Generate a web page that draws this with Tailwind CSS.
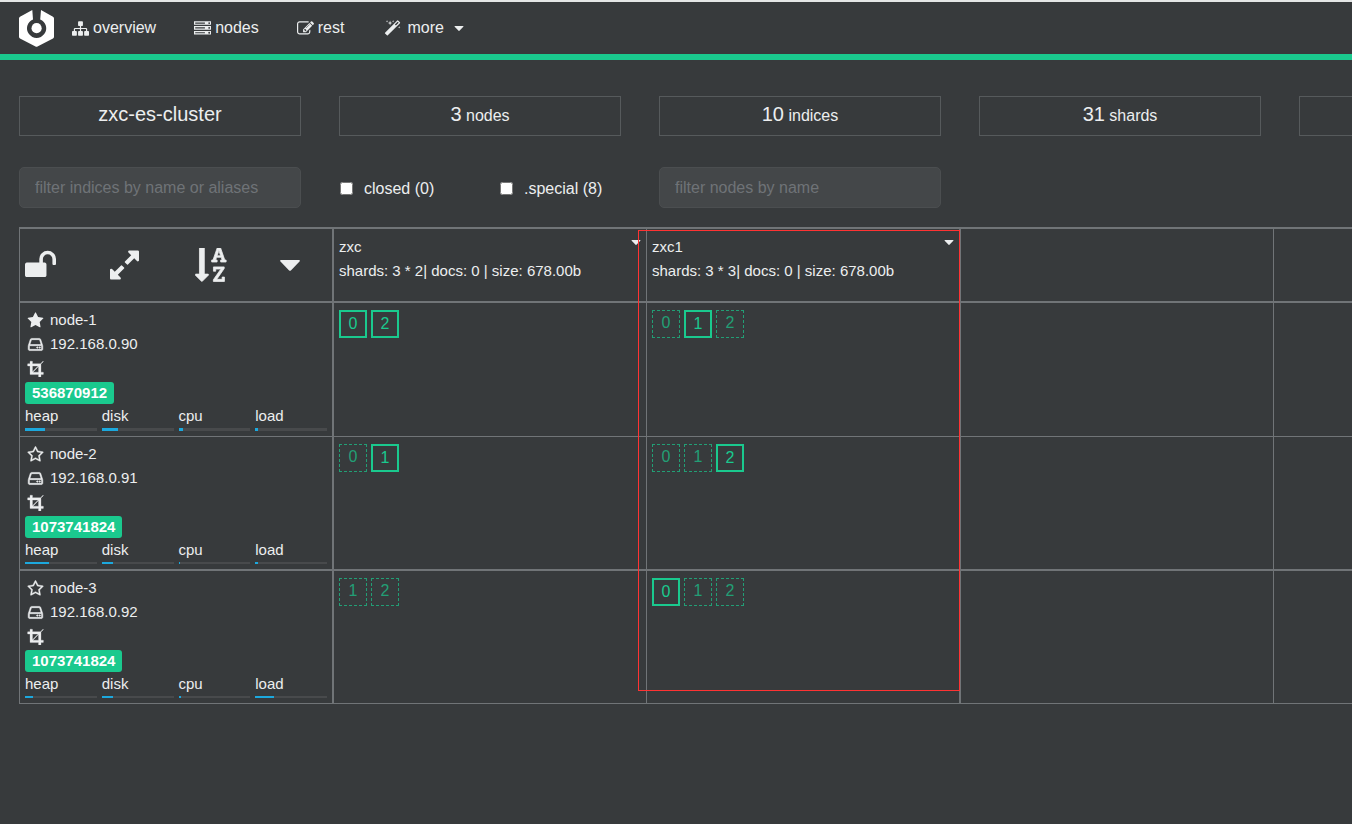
<!DOCTYPE html>
<html lang="en">
<head>
    <meta charset="UTF-8">
    <meta name="viewport" content="width=device-width, initial-scale=1.0">
    <title>zxc-es-cluster</title>
    <script src="https://cdn.jsdelivr.net/npm/@tailwindcss/browser@4"></script>
</head>
<body class="min-h-screen overflow-x-hidden bg-[#373a3c] font-['Liberation_Sans',Arial,sans-serif] text-base text-[#eceeef]">

    <!-- Icon definitions -->
    <svg class="hidden" aria-hidden="true">
        <symbol id="i-sitemap" viewBox="0 0 1792 1792"><path d="M1792 1248v320q0 40-28 68t-68 28h-320q-40 0-68-28t-28-68v-320q0-40 28-68t68-28h96v-192h-512v192h96q40 0 68 28t28 68v320q0 40-28 68t-68 28h-320q-40 0-68-28t-28-68v-320q0-40 28-68t68-28h96v-192h-512v192h96q40 0 68 28t28 68v320q0 40-28 68t-68 28h-320q-40 0-68-28t-28-68v-320q0-40 28-68t68-28h96v-192q0-52 38-90t90-38h512v-192h-96q-40 0-68-28t-28-68v-320q0-40 28-68t68-28h320q40 0 68 28t28 68v320q0 40-28 68t-68 28h-96v192h512q52 0 90 38t38 90v192h96q40 0 68 28t28 68z"/></symbol>
        <symbol id="i-server" viewBox="0 0 1792 1792"><path d="M128 1408h1024v-128h-1024v128zm0-512h1024v-128h-1024v128zm1568 448q0-40-28-68t-68-28-68 28-28 68 28 68 68 28 68-28 28-68zm-1568-960h1024v-128h-1024v128zm1568 448q0-40-28-68t-68-28-68 28-28 68 28 68 68 28 68-28 28-68zm0-512q0-40-28-68t-68-28-68 28-28 68 28 68 68 28 68-28 28-68zm96 832v384h-1792v-384h1792zm0-512v384h-1792v-384h1792zm0-512v384h-1792v-384h1792z"/></symbol>
        <symbol id="i-edit" viewBox="0 0 1792 1792"><path d="M888 1184l116-116-152-152-116 116v56h96v96h56zm440-720q-16-16-33 1l-350 350q-17 17-1 33t33-1l350-350q17-17 1-33zm80 594v190q0 119-84.5 203.5t-203.5 84.5h-832q-119 0-203.5-84.5t-84.5-203.5v-832q0-119 84.5-203.5t203.5-84.5h832q63 0 117 25 15 7 18 23 3 17-9 29l-49 49q-14 14-32 8-23-6-45-6h-832q-66 0-113 47t-47 113v832q0 66 47 113t113 47h832q66 0 113-47t47-113v-126q0-13 9-22l64-64q15-15 35-7t20 29zm-96-738l288 288-672 672h-288v-288zm444 132l-92 92-288-288 92-92q28-28 68-28t68 28l152 152q28 28 28 68t-28 68z"/></symbol>
        <symbol id="i-magic" viewBox="0 0 1792 1792"><path d="M1254 581l293-293-107-107-293 293zm447-293q0 27-18 45l-1286 1286q-18 18-45 18t-45-18l-198-198q-18-18-18-45t18-45l1286-1286q18-18 45-18t45 18l198 198q18 18 18 45zm-1351-190l98 30-98 30-30 98-30-98-98-30 98-30 30-98zm350 162l196 60-196 60-60 196-60-196-196-60 196-60 60-196zm930 478l98 30-98 30-30 98-30-98-98-30 98-30 30-98zm-640-640l98 30-98 30-30 98-30-98-98-30 98-30 30-98z"/></symbol>
        <symbol id="i-unlock" viewBox="64 0 1664 1792"><path d="M1728 576v256q0 26-19 45t-45 19h-64q-26 0-45-19t-19-45v-256q0-106-75-181t-181-75-181 75-75 181v192h96q40 0 68 28t28 68v576q0 40-28 68t-68 28h-960q-40 0-68-28t-28-68v-576q0-40 28-68t68-28h672v-192q0-185 131.5-316.5t316.5-131.5 316.5 131.5 131.5 316.5z"/></symbol>
        <symbol id="i-expand" viewBox="128 0 1536 1792"><path d="M883 1056q0 13-10 23l-332 332 144 144q19 19 19 45t-19 45-45 19h-448q-26 0-45-19t-19-45v-448q0-26 19-45t45-19 45 19l144 144 332-332q10-10 23-10t23 10l114 114q10 10 10 23zm781-864v448q0 26-19 45t-45 19-45-19l-144-144-332 332q-10 10-23 10t-23-10l-114-114q-10-10-10-23t10-23l332-332-144-144q-19-19-19-45t19-45 45-19h448q26 0 45 19t19 45z"/></symbol>
        <symbol id="i-sort" viewBox="32 0 1664 1792"><path stroke="currentColor" stroke-width="40" d="M1191 408h177l-72-218-12-47q-2-16-2-20h-4l-3 20q0 1-3.5 18t-7.5 29zm-455 1000q0 12-10 24l-319 319q-10 9-23 9-12 0-23-9l-320-320q-15-16-7-35 8-20 30-20h192v-1376q0-14 9-23t23-9h192q14 0 23 9t9 23v1376h192q14 0 23 9t9 23zm836 123v233h-584v-90l369-529q12-18 21-27l11-9v-3q-2 0-6.500.5t-7.500.5q-12 3-30 3h-232v115h-120v-229h567v89l-369 530q-6 8-21 26l-11 11v2l14-2q9-2 30-2h248v-119h121zm89-898v106h-288v-106h75l-47-144h-243l-47 144h75v106h-287v-106h70l230-662h162l230 662h70z"/></symbol>
        <symbol id="i-star" viewBox="0 0 1792 1792"><path d="M1728 647q0 22-26 48l-363 354 86 500q1 7 1 20 0 21-10.5 35.5t-30.5 14.5q-19 0-40-12l-449-236-449 236q-22 12-40 12-21 0-31.5-14.5t-10.5-35.5q0-6 2-20l86-500-364-354q-25-27-25-48 0-37 56-46l502-73 225-455q19-41 49-41t49 41l225 455 502 73q56 9 56 46z"/></symbol>
        <symbol id="i-star-o" viewBox="0 0 1792 1792"><path stroke="currentColor" stroke-width="40" d="M1201 1004l306-297-422-62-189-382-189 382-422 62 306 297-73 421 378-199 377 199zm527-357q0 22-26 48l-363 354 86 500q1 7 1 20 0 50-41 50-19 0-40-12l-449-236-449 236q-22 12-40 12-21 0-31.5-14.5t-10.5-35.5q0-6 2-20l86-500-364-354q-25-27-25-48 0-37 56-46l502-73 225-455q19-41 49-41t49 41l225 455 502 73q56 9 56 46z"/></symbol>
        <symbol id="i-hdd" viewBox="0 0 1792 1792"><path stroke="currentColor" stroke-width="60" d="M1168 1216q0 33-23.5 56.500t-56.500 23.500-56.500-23.500-23.500-56.500 23.500-56.500 56.500-23.500 56.500 23.500 23.500 56.500zm256 0q0 33-23.500 56.500t-56.500 23.500-56.500-23.500-23.500-56.500 23.500-56.500 56.500-23.500 56.500 23.500 23.500 56.500zm112 160v-320q0-13-9.500-22.500t-22.500-9.500h-1216q-13 0-22.500 9.500t-9.500 22.500v320q0 13 9.500 22.500t22.500 9.500h1216q13 0 22.500-9.500t9.500-22.500zm-1230-480h1180l-157-482q-4-13-16-21.500t-26-8.500h-782q-14 0-26 8.500t-16 21.500zm1358 160v320q0 66-47 113t-113 47h-1216q-66 0-113-47t-47-113v-320q0-25 16-75l197-606q17-53 63-86t101-33h782q55 0 101 33t63 86l197 606q16 50 16 75z"/></symbol>
        <symbol id="i-crop" viewBox="0 0 1792 1792"><path stroke="currentColor" stroke-width="30" d="M621 1280h595v-595zm-45-45l595-595h-595v595zm1152 77v192q0 14-9 23t-23 9h-224v224q0 14-9 23t-23 9h-192q-14 0-23-9t-9-23v-224h-864q-14 0-23-9t-9-23v-864h-224q-14 0-23-9t-9-23v-192q0-14 9-23t23-9h224v-224q0-14 9-23t23-9h192q14 0 23 9t9 23v224h851l246-247q10-9 23-9t23 9q9 10 9 23t-9 23l-247 246v851h224q14 0 23 9t9 23z"/></symbol>
        <symbol id="i-caret" viewBox="0 0 20 11"><path d="M1 0h18q1.500.4.500 1.600l-8.600 8.800q-.9.800-1.800 0l-8.600-8.800q-1-1.200.5-1.600z"/></symbol>
    </svg>

    <!-- Navigation -->
    <nav class="flex h-[60px] items-center border-t-2 border-b-6 border-t-[#e4e6e6] border-b-[#1ac98e] pl-[19px]">
        <a href="#" aria-label="Home" class="mr-[18px]">
            <svg class="h-[37px] w-[35px]" viewBox="0 0 35 37">
                <path fill="#fff" d="M13.300 0 1 6.800Q0 7.400 0 8.600v18.200q0 1.200 1 1.800l15.500 8q1 .5 2 0l15.500-8q1-.6 1-1.800V8.600q0-1.200-1-1.800L22 0 21.200 9.400a9.600 9.600 0 1 1-7.200 0z"/>
                <circle cx="17.600" cy="18.200" r="5.100" fill="#fff"/>
            </svg>
        </a>
        <a href="#overview" class="mr-[38px] flex items-center gap-1">
            <svg class="size-[17px] fill-current"><use href="#i-sitemap"/></svg>overview
        </a>
        <a href="#nodes" class="mr-[38px] flex items-center gap-1">
            <svg class="size-[17px] fill-current"><use href="#i-server"/></svg>nodes
        </a>
        <a href="#rest" class="mr-[38px] flex items-center gap-1">
            <svg class="size-[17px] fill-current"><use href="#i-edit"/></svg>rest
        </a>
        <button type="button" class="ml-[2px] flex items-center">
            <svg class="mr-[6px] size-[17px] fill-current"><use href="#i-magic"/></svg>more
            <svg class="ml-[10px] h-[5px] w-[10px] fill-current"><use href="#i-caret"/></svg>
        </button>
    </nav>

    <main class="min-w-[1600px] px-[19px] pt-9">

        <!-- Cluster stats -->
        <div class="grid grid-cols-5 gap-[38px] text-center leading-[34px]">
            <div class="h-10 border border-[#565a5c] text-xl leading-[34px]">zxc-es-cluster</div>
            <div class="h-10 border border-[#565a5c]"><span class="text-xl leading-[34px]">3</span> nodes</div>
            <div class="h-10 border border-[#565a5c]"><span class="text-xl leading-[34px]">10</span> indices</div>
            <div class="h-10 border border-[#565a5c]"><span class="text-xl leading-[34px]">31</span> shards</div>
            <div class="h-10 border border-[#565a5c]"></div>
        </div>

        <!-- Filters -->
        <div class="mt-[31px] grid grid-cols-5 gap-[38px]">
            <input type="text" aria-label="Filter indices" placeholder="filter indices by name or aliases" class="h-[41px] rounded-[5px] border border-[#4b4e50] bg-[#444749] px-[15px] placeholder:text-[#6f7377]">
            <div class="grid grid-cols-2 items-center gap-[38px] pt-[2px]">
                <label class="flex items-center gap-[11px] whitespace-nowrap"><input type="checkbox" class="ml-px size-[13px]">closed (0)</label>
                <label class="flex items-center gap-[11px] whitespace-nowrap"><input type="checkbox" class="ml-px size-[13px]">.special (8)</label>
            </div>
            <input type="text" aria-label="Filter nodes" placeholder="filter nodes by name" class="h-[41px] rounded-[5px] border border-[#4b4e50] bg-[#444749] px-[15px] placeholder:text-[#6f7377]">
        </div>

        <!-- Shard allocation -->
        <div class="relative mt-[19px]">
            <table class="w-[1567px] table-fixed border-separate border-spacing-0 text-left text-[15px] leading-6">
                <colgroup>
                    <col class="w-[313px]">
                    <col class="w-[314px]">
                    <col class="w-[313px]">
                    <col class="w-[314px]">
                    <col class="w-[313px]">
                </colgroup>
                <thead>
                    <tr class="h-[74px] *:border-t-2 *:border-[#707477] *:px-[5px] *:pt-[6px] *:align-top *:font-normal">
                        <th class="border-l">
                            <div class="flex h-[60px] items-center gap-[54px]">
                                <button type="button" aria-label="Unlock" class="w-[31px]"><svg class="h-[34px] w-[31px] fill-current"><use href="#i-unlock"/></svg></button>
                                <button type="button" aria-label="Expand" class="w-[31px]"><svg class="h-[34px] w-[29px] fill-current"><use href="#i-expand"/></svg></button>
                                <button type="button" aria-label="Sort" class="w-[31px]"><svg class="h-[34px] w-[32px] fill-current"><use href="#i-sort"/></svg></button>
                                <button type="button" aria-label="Options" class="w-[31px]"><svg class="h-[11px] w-[20px] fill-current"><use href="#i-caret"/></svg></button>
                            </div>
                        </th>
                        <th class="border-l-2">
                            <div class="flex justify-between">zxc
                                <button type="button" aria-label="zxc options"><svg class="mb-[9px] h-[5px] w-[10px] fill-current"><use href="#i-caret"/></svg></button>
                            </div>
                            <div>shards: 3 * 2| docs: 0 | size: 678.00b</div>
                        </th>
                        <th class="border-l">
                            <div class="flex justify-between">zxc1
                                <button type="button" aria-label="zxc1 options"><svg class="mb-[9px] h-[5px] w-[10px] fill-current"><use href="#i-caret"/></svg></button>
                            </div>
                            <div>shards: 3 * 3| docs: 0 | size: 678.00b</div>
                        </th>
                        <th class="border-l-2"></th>
                        <th class="border-l"></th>
                    </tr>
                </thead>
                <tbody>
                    <!-- node-1 -->
                    <tr class="h-[135px] *:border-t-2 *:border-[#707477] *:p-[5px] *:align-top">
                        <td class="border-l">
                            <div class="flex items-center gap-[6px] pl-[2px]"><svg class="size-[17px] fill-current"><use href="#i-star"/></svg>node-1</div>
                            <div class="flex items-center gap-[6px] pl-[2px]"><svg class="size-[17px] fill-current"><use href="#i-hdd"/></svg>192.168.0.90</div>
                            <div class="flex h-6 items-center pl-[2px]"><svg class="size-[17px] fill-current"><use href="#i-crop"/></svg></div>
                            <div class="flex h-6 items-end"><span class="rounded-[3px] bg-[#1ac98e] px-[7px] leading-[22px] font-bold text-white">536870912</span></div>
                            <div class="grid grid-cols-4 gap-[5px]">
                                <div>heap<div class="h-[3px] bg-[#484a4c]"><div class="h-full bg-[#1ca8dd]" style="width: 28%"></div></div></div>
                                <div>disk<div class="h-[3px] bg-[#484a4c]"><div class="h-full bg-[#1ca8dd]" style="width: 22%"></div></div></div>
                                <div>cpu<div class="h-[3px] bg-[#484a4c]"><div class="h-full bg-[#1ca8dd]" style="width: 6%"></div></div></div>
                                <div>load<div class="h-[3px] bg-[#484a4c]"><div class="h-full bg-[#1ca8dd]" style="width: 4%"></div></div></div>
                            </div>
                        </td>
                        <td class="border-l-2">
                            <div class="flex gap-1 pt-[2px] text-center text-base text-[#1ac98e]">
                                <span class="size-7 border-2 border-[#1ac98e]">0</span>
                                <span class="size-7 border-2 border-[#1ac98e]">2</span>
                            </div>
                        </td>
                        <td class="border-l">
                            <div class="flex gap-1 pt-[2px] text-center text-base text-[#1ac98e]">
                                <span class="size-7 border border-dashed border-[#1ac98e] opacity-70">0</span>
                                <span class="size-7 border-2 border-[#1ac98e]">1</span>
                                <span class="size-7 border border-dashed border-[#1ac98e] opacity-70">2</span>
                            </div>
                        </td>
                        <td class="border-l-2"></td>
                        <td class="border-l"></td>
                    </tr>
                    <!-- node-2 -->
                    <tr class="h-[133px] *:border-t *:border-[#707477] *:p-[5px] *:pb-0 *:align-top">
                        <td class="border-l">
                            <div class="flex items-center gap-[6px] pl-[2px]"><svg class="size-[17px] fill-current"><use href="#i-star-o"/></svg>node-2</div>
                            <div class="flex items-center gap-[6px] pl-[2px]"><svg class="size-[17px] fill-current"><use href="#i-hdd"/></svg>192.168.0.91</div>
                            <div class="flex h-6 items-center pl-[2px]"><svg class="size-[17px] fill-current"><use href="#i-crop"/></svg></div>
                            <div class="flex h-6 items-end"><span class="rounded-[3px] bg-[#1ac98e] px-[7px] leading-[22px] font-bold text-white">1073741824</span></div>
                            <div class="grid grid-cols-4 gap-[5px]">
                                <div>heap<div class="h-[2px] bg-[#484a4c]"><div class="h-full bg-[#1ca8dd]" style="width: 33%"></div></div></div>
                                <div>disk<div class="h-[2px] bg-[#484a4c]"><div class="h-full bg-[#1ca8dd]" style="width: 15%"></div></div></div>
                                <div>cpu<div class="h-[2px] bg-[#484a4c]"><div class="h-full bg-[#1ca8dd]" style="width: 1%"></div></div></div>
                                <div>load<div class="h-[2px] bg-[#484a4c]"><div class="h-full bg-[#1ca8dd]" style="width: 4%"></div></div></div>
                            </div>
                        </td>
                        <td class="border-l-2">
                            <div class="flex gap-1 pt-[2px] text-center text-base text-[#1ac98e]">
                                <span class="size-7 border border-dashed border-[#1ac98e] opacity-70">0</span>
                                <span class="size-7 border-2 border-[#1ac98e]">1</span>
                            </div>
                        </td>
                        <td class="border-l">
                            <div class="flex gap-1 pt-[2px] text-center text-base text-[#1ac98e]">
                                <span class="size-7 border border-dashed border-[#1ac98e] opacity-70">0</span>
                                <span class="size-7 border border-dashed border-[#1ac98e] opacity-70">1</span>
                                <span class="size-7 border-2 border-[#1ac98e]">2</span>
                            </div>
                        </td>
                        <td class="border-l-2"></td>
                        <td class="border-l"></td>
                    </tr>
                    <!-- node-3 -->
                    <tr class="h-[135px] *:border-t-2 *:border-b *:border-[#707477] *:p-[5px] *:align-top">
                        <td class="border-l">
                            <div class="flex items-center gap-[6px] pl-[2px]"><svg class="size-[17px] fill-current"><use href="#i-star-o"/></svg>node-3</div>
                            <div class="flex items-center gap-[6px] pl-[2px]"><svg class="size-[17px] fill-current"><use href="#i-hdd"/></svg>192.168.0.92</div>
                            <div class="flex h-6 items-center pl-[2px]"><svg class="size-[17px] fill-current"><use href="#i-crop"/></svg></div>
                            <div class="flex h-6 items-end"><span class="rounded-[3px] bg-[#1ac98e] px-[7px] leading-[22px] font-bold text-white">1073741824</span></div>
                            <div class="grid grid-cols-4 gap-[5px]">
                                <div>heap<div class="h-[2px] bg-[#484a4c]"><div class="h-full bg-[#1ca8dd]" style="width: 11%"></div></div></div>
                                <div>disk<div class="h-[2px] bg-[#484a4c]"><div class="h-full bg-[#1ca8dd]" style="width: 15%"></div></div></div>
                                <div>cpu<div class="h-[2px] bg-[#484a4c]"><div class="h-full bg-[#1ca8dd]" style="width: 3%"></div></div></div>
                                <div>load<div class="h-[2px] bg-[#484a4c]"><div class="h-full bg-[#1ca8dd]" style="width: 26%"></div></div></div>
                            </div>
                        </td>
                        <td class="border-l-2">
                            <div class="flex gap-1 pt-[2px] text-center text-base text-[#1ac98e]">
                                <span class="size-7 border border-dashed border-[#1ac98e] opacity-70">1</span>
                                <span class="size-7 border border-dashed border-[#1ac98e] opacity-70">2</span>
                            </div>
                        </td>
                        <td class="border-l">
                            <div class="flex gap-1 pt-[2px] text-center text-base text-[#1ac98e]">
                                <span class="size-7 border-2 border-[#1ac98e]">0</span>
                                <span class="size-7 border border-dashed border-[#1ac98e] opacity-70">1</span>
                                <span class="size-7 border border-dashed border-[#1ac98e] opacity-70">2</span>
                            </div>
                        </td>
                        <td class="border-l-2"></td>
                        <td class="border-l"></td>
                    </tr>
                </tbody>
            </table>

            <!-- Highlight over zxc1 -->
            <div class="pointer-events-none absolute top-[3px] left-[619px] h-[461px] w-[322px] border border-[#ff3333]"></div>
        </div>
    </main>

</body>
</html>
